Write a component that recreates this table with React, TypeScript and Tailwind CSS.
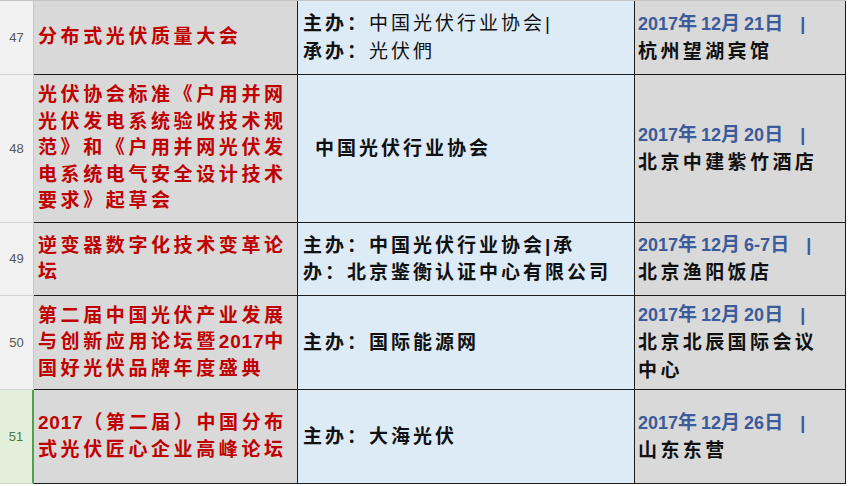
import React from "react";

const FONT = "font-['Liberation_Sans','Noto_Sans_CJK_SC',sans-serif]";

// wrap runs of ascii (digits, bars, dashes) so they don't get the wide CJK tracking
function mix(s: string, asciiClass: string) {
  return s
    .split(/([\x20-\x7e]+)/)
    .filter(Boolean)
    .map((part, i) =>
      /^[\x20-\x7e]+$/.test(part) ? (
        <span key={i} className={asciiClass}>
          {part}
        </span>
      ) : (
        <React.Fragment key={i}>{part}</React.Fragment>
      ),
    );
}

interface Row {
  n: number;
  h: string;
  title: string[];
  org: React.ReactNode;
  date: string;
  place: string[];
  selected?: boolean;
}

const rows: Row[] = [
  {
    n: 47,
    h: "h-[74px]",
    title: ["分布式光伏质量大会"],
    org: (
      <>
        <div>
          <span className="font-bold">主办：</span>
          <span className="font-normal">中国光伏行业协会|</span>
        </div>
        <div>
          <span className="font-bold">承办：</span>
          <span className="font-normal">光伏們</span>
        </div>
      </>
    ),
    date: "2017年12月21日",
    place: ["杭州望湖宾馆"],
  },
  {
    n: 48,
    h: "h-[148px]",
    title: [
      "光伏协会标准《户用并网",
      "光伏发电系统验收技术规",
      "范》和《户用并网光伏发",
      "电系统电气安全设计技术",
      "要求》起草会",
    ],
    org: <div className="pl-[12px] font-bold">中国光伏行业协会</div>,
    date: "2017年12月20日",
    place: ["北京中建紫竹酒店"],
  },
  {
    n: 49,
    h: "h-[73px]",
    title: ["逆变器数字化技术变革论", "坛"],
    org: (
      <div className="font-bold">
        <div>主办：中国光伏行业协会|承</div>
        <div>办：北京鉴衡认证中心有限公司</div>
      </div>
    ),
    date: "2017年12月6-7日",
    place: ["北京渔阳饭店"],
  },
  {
    n: 50,
    h: "h-[94px]",
    title: [
      "第二届中国光伏产业发展",
      "与创新应用论坛暨2017中",
      "国好光伏品牌年度盛典",
    ],
    org: <div className="font-bold">主办：国际能源网</div>,
    date: "2017年12月20日",
    place: ["北京北辰国际会议", "中心"],
  },
  {
    n: 51,
    h: "h-[94px]",
    title: ["2017（第二届）中国分布", "式光伏匠心企业高峰论坛"],
    org: <div className="font-bold">主办：大海光伏</div>,
    date: "2017年12月26日",
    place: ["山东东营"],
    selected: true,
  },
];

function SheetRow({ row }: { row: Row }) {
  return (
    <div className={`flex ${row.h}`}>
      <div
        className={`flex w-[34px] shrink-0 items-center justify-center border-b text-[13px] ${
          row.selected
            ? "border-b-[#c6d9bd] border-r-2 border-r-[#4f9f4f] bg-[#e2efda] text-[#4a7a3a]"
            : "border-b-[#d4d4d4] border-r border-r-[#c8c8c8] bg-[#f2f2f2] text-[#555]"
        } font-['Liberation_Sans',sans-serif]`}
      >
        {row.n}
      </div>
      <div className="flex w-[264px] shrink-0 flex-col justify-center border-b border-r border-[#1c1c1c] bg-[#d9d9d9] pl-[4px] text-[19px] font-bold leading-[26.5px] tracking-[3.6px] text-[#c00000] whitespace-nowrap">
        {row.title.map((t, i) => (
          <div key={i}>{mix(t, "tracking-[0.8px]")}</div>
        ))}
      </div>
      <div className="flex w-[337px] shrink-0 flex-col justify-center border-b border-r border-[#1c1c1c] bg-[#ddebf7] pl-[5px] text-[19px] leading-[27.5px] tracking-[3px] text-[#111] whitespace-nowrap">
        {row.org}
      </div>
      <div className="flex w-[211px] shrink-0 flex-col justify-center border-b border-r border-[#1c1c1c] bg-[#d9d9d9] pl-[3px] font-bold leading-[28px] whitespace-nowrap">
        <div className="text-[19px] tracking-[4px] text-[#3b5b9b]">
          {mix(row.date, "text-[18px] tracking-[0px]")}
          <span className="ml-[13px] text-[18px] tracking-[0px]">|</span>
        </div>
        {row.place.map((p, i) => (
          <div key={i} className="text-[19px] tracking-[3.4px] text-[#111]">
            {p}
          </div>
        ))}
      </div>
    </div>
  );
}

export default function App() {
  return (
    <div className={`h-[486px] w-[849px] overflow-hidden bg-white ${FONT}`}>
      <div className="h-px w-[846px] bg-[#c4c4c4]" />
      {rows.map((r) => (
        <SheetRow key={r.n} row={r} />
      ))}
    </div>
  );
}
